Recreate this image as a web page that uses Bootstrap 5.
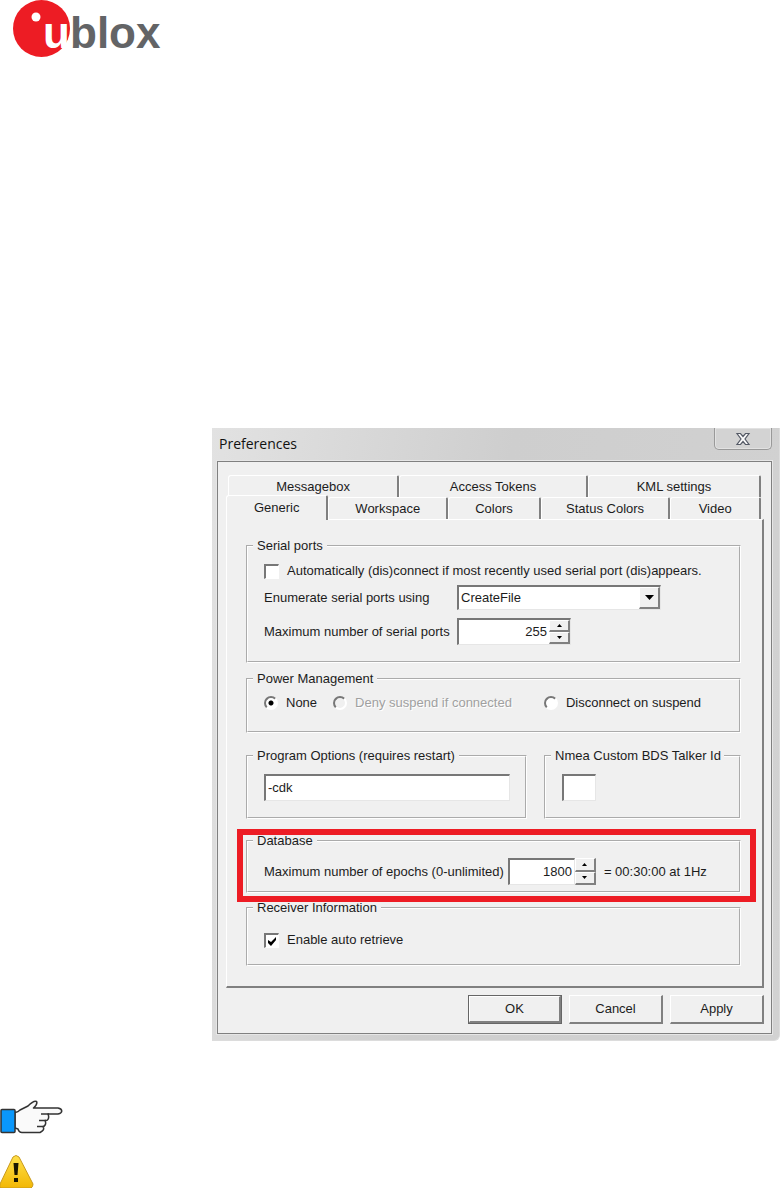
<!DOCTYPE html>
<html lang="en">
<head>
<meta charset="utf-8">
<meta name="viewport" content="width=device-width, initial-scale=1">
<title>u-blox Preferences</title>
<link href="https://cdn.jsdelivr.net/npm/bootstrap@5.3.0/dist/css/bootstrap.min.css" rel="stylesheet">
<style>
  :root { --face: #f0f0f0; --edge: #808080; --lite: #fff; --ink: #1c1c1c; }
  body { font-family: "Liberation Sans", Arial, sans-serif; font-size: 13px; line-height: 20px; color: var(--ink); background: #fff; }
  button, input, select { font: inherit; color: inherit; border-radius: 0; }
  svg { display: block; }
  .brand-bar { height: 58px; margin-bottom: 370px; padding-left: 13px; }
  .brand-bar text { font-weight: 700; font-size: 44px; }
  .page-shift { padding-left: 212px; }

  .dialog-frame { padding: 0 7px 6px 5px; border: solid #dcdcdc; border-width: 0 1px 1px 0; background: linear-gradient(100deg, #e2e2e2, #cecece 45%, #d2d2d2); border-bottom-right-radius: 6px; }
  .title-row { height: 33px; padding-left: 2px; }
  .title-row h1 { font: 14px/20px "Open Sans", "Noto Sans", sans-serif; margin: 6px 0 0; color: #111; }
  .close-btn { width: 58px; height: 22px; padding: 0; border: 1px solid #999; border-top: 0; border-radius: 0 0 5px 5px; background: #d3d3d3; box-shadow: inset 0 0 0 1px #e2e2e2; }
  .client { background: var(--face); border: 1px solid var(--edge); box-shadow: 0 0 0 1px #e6e6e6; padding: 13px 7px 9px 8px; }

  .tab-line { padding: 0 3px 0 2px; }
  .tab-btn { height: 22px; padding: 0; border: solid; border-width: 1px 2px 0 1px; border-color: var(--lite) var(--edge) var(--lite) var(--lite); border-radius: 3px 2px 0 0; background: var(--face); text-align: center; }
  .tab-btn.chosen { height: 25px; margin: -2px 0 -1px -2px; padding-bottom: 1px; position: relative; }
  .g90 { flex: 90 1 0; } .g92 { flex: 92 1 0; } .g102 { flex: 102 1 0; } .g120 { flex: 120 1 0; } .g130 { flex: 130 1 0; }
  .g171 { flex: 171 1 0; } .g189 { flex: 189 1 0; } .g173 { flex: 173 1 0; }
  .tab-page { border: solid; border-width: 1px 2px 2px 1px; border-color: var(--lite) var(--edge) var(--edge) var(--lite); padding: 16px 21px 20px 19px; }

  fieldset { border: 2px groove #fff; padding: 0 15px 0 16px; }
  legend { float: none; width: auto; margin: 0 0 0 -11px; padding: 0 4px; font-size: 13px; line-height: 20px; white-space: nowrap; }
  .f-serial { height: 127px; padding-top: 1px; margin-bottom: 6px; }
  .f-power { height: 64px; margin-bottom: 13px; }
  .f-short { height: 73px; }
  .f-data { height: 62px; padding-top: 7px; }
  .f-recv { height: 68px; margin-top: 5px; }
  .options-row { gap: 17px; margin-bottom: 12px; }
  .talker { flex: 0 0 197px; min-width: 0; padding-right: 0; }
  .talker legend { padding-right: 3px; }
  .field-label { width: 193px; }

  .sunk { border: solid; border-width: 2px 1px 1px 2px; border-color: #777 #e6e6e6 #e6e6e6 #777; background: #fff; height: 27px; }
  .sunk input, .sunk select { appearance: none; border: 0; background: transparent; outline: 0; min-width: 0; padding: 0 2px; }
  input[type=number] { appearance: textfield; -moz-appearance: textfield; }
  input::-webkit-inner-spin-button { display: none; }
  .combo { width: 204px; height: 25px; }
  .raised { border: solid; border-width: 1px 2px 2px 1px; border-color: var(--lite) var(--edge) var(--edge) var(--lite); background: var(--face); padding: 0; }
  .combo-arrow { width: 21px; pointer-events: none; }
  .ports-box { width: 114px; }
  .epochs-box { width: 67px; }
  .id-box { width: 34px; }
  .spin { flex: 0 0 21px; }
  .spin .raised { flex: 1 1 0; min-height: 0; }

  .tick { appearance: none; width: 15px; height: 15px; margin: 0; border: solid; border-width: 2px 1px 1px 2px; border-color: #777 #fff #fff #777; background: #fff; }
  .tick:checked { background: #fff url("data:image/svg+xml,%3Csvg xmlns='http://www.w3.org/2000/svg' viewBox='0 0 12 12'%3E%3Cpath d='M2 5v3l3 3 5-6V2L5 7z'/%3E%3C/svg%3E") center/12px; }
  .dot { appearance: none; width: 14px; height: 14px; margin: 0; border: 2px solid; border-color: #777 #fff #fff #777; border-radius: 50%; background: #fff; }
  .dot:checked { background: radial-gradient(circle, #000 2px, #fff 3px); }
  .dot:disabled { background: var(--face); }
  .muted-lbl { color: #a0a0a0; text-shadow: 1px 1px #fff; }
  .marker { position: absolute; inset: -2px -15px -9px -9px; border: 6px solid #ed1c24; pointer-events: none; }

  .cmd-row { gap: 7px; margin-top: 7px; }
  .cmd { width: 94px; height: 29px; }
  .cmd.main-cmd { outline: 1px solid #666; outline-offset: -1px; border-width: 2px 3px 3px 2px; }
  .notes { margin-top: 59px; }
  .notes svg + svg { margin-top: 21px; }
</style>
</head>
<body>
<header class="brand-bar">
  <svg width="160" height="58" viewBox="0 0 160 58" role="img" aria-label="ublox">
    <circle cx="28.500" cy="28.500" r="28.500" fill="#ed1c24"/>
    <circle cx="23" cy="17" r="4.500" fill="#fff"/>
    <text x="30" y="48" fill="#fff">u</text>
    <text x="57" y="48" fill="#636466">blox</text>
  </svg>
</header>

<main class="page-shift">
  <form class="dialog-frame" onsubmit="return false">
    <div class="title-row d-flex justify-content-between align-items-start">
      <h1>Preferences</h1>
      <button type="button" class="close-btn d-flex align-items-center justify-content-center" aria-label="Close">
        <svg width="16" height="14" viewBox="0 0 16 14"><path d="M2 1.500h3.500L8 4.500l2.500-3H14L10 7l4 5.500h-3.500L8 9.500l-2.500 3H2L6 7z" fill="#fafafa" stroke="#555a66" stroke-width="1.200"/></svg>
      </button>
    </div>

    <div class="client">
      <div class="tab-line d-flex" role="tablist">
        <button type="button" role="tab" class="tab-btn g171">Messagebox</button>
        <button type="button" role="tab" class="tab-btn g189">Access Tokens</button>
        <button type="button" role="tab" class="tab-btn g173">KML settings</button>
      </div>
      <div class="tab-line d-flex" role="tablist">
        <button type="button" role="tab" class="tab-btn g102 chosen" aria-selected="true">Generic</button>
        <button type="button" role="tab" class="tab-btn g120">Workspace</button>
        <button type="button" role="tab" class="tab-btn g92">Colors</button>
        <button type="button" role="tab" class="tab-btn g130">Status Colors</button>
        <button type="button" role="tab" class="tab-btn g90">Video</button>
      </div>

      <div class="tab-page" role="tabpanel">
        <fieldset class="f-serial">
          <legend>Serial ports</legend>
          <div class="d-flex align-items-center gap-2 mb-1 pt-1">
            <input type="checkbox" class="tick" id="auto">
            <label for="auto">Automatically (dis)connect if most recently used serial port (dis)appears.</label>
          </div>
          <div class="d-flex align-items-center mb-2">
            <label class="field-label" for="enum">Enumerate serial ports using</label>
            <div class="sunk combo d-flex">
              <select id="enum" class="flex-grow-1"><option>CreateFile</option></select>
              <span class="raised combo-arrow d-flex align-items-center justify-content-center"><svg width="9" height="5"><path d="M0 0h9L4.500 5z"/></svg></span>
            </div>
          </div>
          <div class="d-flex align-items-center">
            <label class="field-label" for="ports">Maximum number of serial ports</label>
            <div class="sunk ports-box d-flex">
              <input id="ports" type="number" class="flex-grow-1 text-end" value="255">
              <div class="spin d-flex flex-column">
                <button type="button" class="raised d-flex align-items-center justify-content-center" aria-label="More ports"><svg width="5" height="3"><path d="M0 3h5L2.500 0z"/></svg></button>
                <button type="button" class="raised d-flex align-items-center justify-content-center" aria-label="Fewer ports"><svg width="5" height="3"><path d="M0 0h5L2.500 3z"/></svg></button>
              </div>
            </div>
          </div>
        </fieldset>

        <fieldset class="f-power">
          <legend>Power Management</legend>
          <div class="d-flex align-items-center pt-1">
            <div class="d-flex align-items-center gap-2 me-3"><input type="radio" name="pm" class="dot" id="pm1" checked><label for="pm1">None</label></div>
            <div class="d-flex align-items-center gap-2 pe-2 me-4"><input type="radio" name="pm" class="dot" id="pm2" disabled><label for="pm2" class="muted-lbl">Deny suspend if connected</label></div>
            <div class="d-flex align-items-center gap-2"><input type="radio" name="pm" class="dot" id="pm3"><label for="pm3">Disconnect on suspend</label></div>
          </div>
        </fieldset>

        <div class="options-row d-flex">
          <fieldset class="f-short flex-grow-1">
            <legend><label for="opts">Program Options (requires restart)</label></legend>
            <div class="sunk d-flex mt-2"><input id="opts" type="text" class="flex-grow-1" value="-cdk"></div>
          </fieldset>
          <fieldset class="f-short talker">
            <legend><label for="bds">Nmea Custom BDS Talker Id</label></legend>
            <div class="sunk id-box d-flex mt-2"><input id="bds" type="text" class="w-100"></div>
          </fieldset>
        </div>

        <div class="position-relative">
          <fieldset class="f-data">
            <legend>Database</legend>
            <div class="d-flex align-items-center">
              <label for="epochs" class="me-1">Maximum number of epochs (0-unlimited)</label>
              <div class="sunk epochs-box d-flex"><input id="epochs" type="number" class="w-100 text-end" value="1800"></div>
              <div class="spin d-flex flex-column align-self-stretch me-2">
                <button type="button" class="raised d-flex align-items-center justify-content-center" aria-label="More epochs"><svg width="5" height="3"><path d="M0 3h5L2.500 0z"/></svg></button>
                <button type="button" class="raised d-flex align-items-center justify-content-center" aria-label="Fewer epochs"><svg width="5" height="3"><path d="M0 0h5L2.500 3z"/></svg></button>
              </div>
              <span>= 00:30:00 at 1Hz</span>
            </div>
          </fieldset>
          <div class="marker"></div>
        </div>

        <fieldset class="f-recv">
          <legend>Receiver Information</legend>
          <div class="d-flex align-items-center gap-2 mt-2 pt-1">
            <input type="checkbox" class="tick" id="retr" checked>
            <label for="retr">Enable auto retrieve</label>
          </div>
        </fieldset>
      </div>

      <div class="cmd-row d-flex justify-content-end">
        <button type="submit" class="raised cmd main-cmd">OK</button>
        <button type="button" class="raised cmd">Cancel</button>
        <button type="button" class="raised cmd">Apply</button>
      </div>
    </div>
  </form>
</main>

<footer class="notes">
  <svg width="63" height="34" viewBox="0 0 63 34" role="img" aria-label="Note">
    <path d="M15 12q2 1 5-2l8-4Q34 0 36.500 1.500 38 4 33.500 8H58c5 1 5 5 0 6H48c2 5-1 7-3 6.500 2 4-1 6-2 6 2 3-1 5-3 6H22q-3 0-4-3.500l-3-1z" fill="#fafafa" stroke="#333" stroke-width="1.500" stroke-linejoin="round"/>
    <path d="M41 14h8M39 20.500h7M37 26.500h6" stroke="#333" stroke-width="1.500"/>
    <rect x="1" y="9.500" width="14" height="23" rx="1" fill="#0a97fb" stroke="#333" stroke-width="1.500"/>
  </svg>
  <svg width="34" height="33" viewBox="0 0 34 33" role="img" aria-label="Warning">
    <defs><linearGradient id="amber" x2="0" y2="1"><stop stop-color="#ffe04a"/><stop offset="1" stop-color="#f2b705"/></linearGradient></defs>
    <path d="M13 2q3-3 6 0l14 27q0 3-2 4H1q-2-1-1-4z" fill="url(#amber)" stroke="#c99a1c"/>
    <path d="M13.500 8h5l-1 12h-3zM14 23h4v4h-4z" fill="#1a1500"/>
  </svg>
</footer>
<script src="https://cdn.jsdelivr.net/npm/bootstrap@5.3.0/dist/js/bootstrap.bundle.min.js"></script>
</body>
</html>
